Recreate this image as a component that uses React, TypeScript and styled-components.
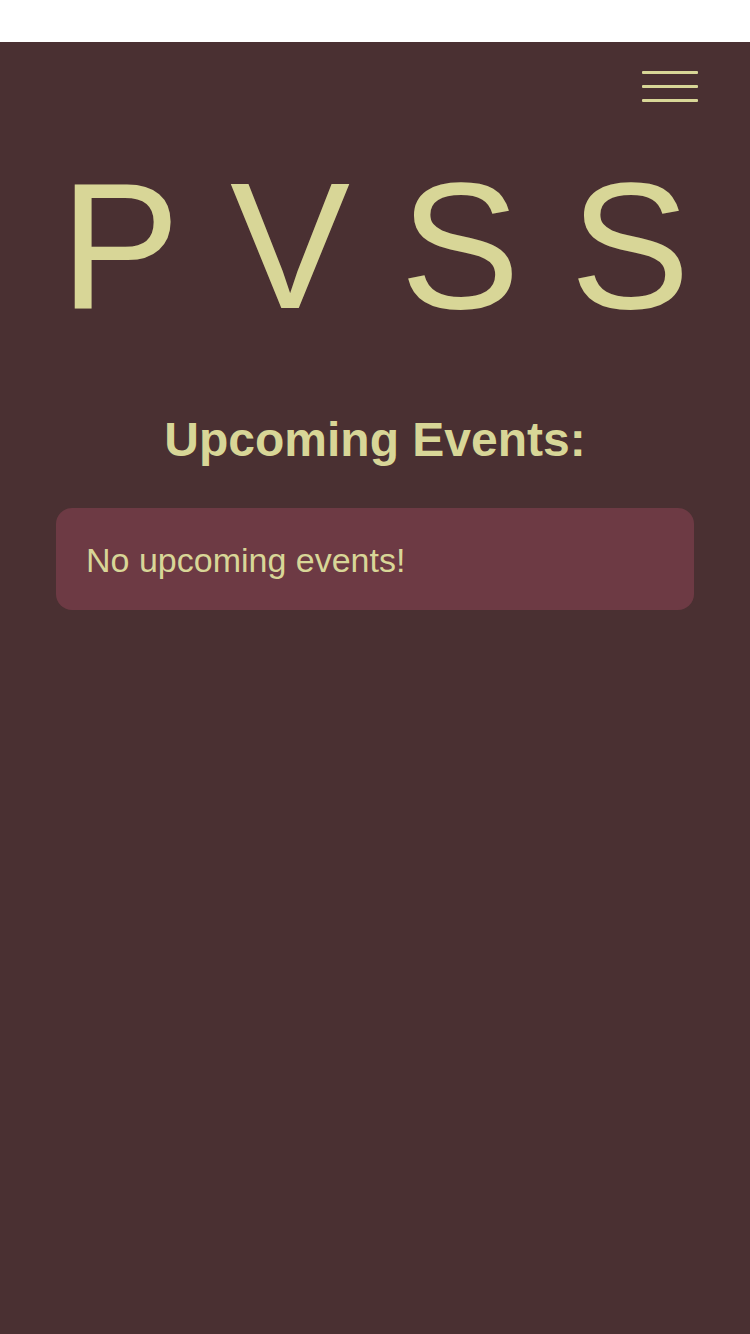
import React from "react";
import styled, { createGlobalStyle } from "styled-components";

const GlobalStyle = createGlobalStyle`
  html, body {
    margin: 0;
    padding: 0;
    background: #ffffff;
  }
  body {
    font-family: "Liberation Sans", Arial, Helvetica, sans-serif;
  }
  * { box-sizing: border-box; }
`;

const Page = styled.div`
  padding-top: 42px;
  background: #ffffff;
`;

const Main = styled.main`
  background: #4a3032;
  min-height: 1292px;
  color: #d8d697;
  display: flex;
  flex-direction: column;
`;

const Header = styled.header`
  display: flex;
  justify-content: flex-end;
  padding: 29px 52px 0 0;
`;

const MenuButton = styled.button`
  width: 56px;
  height: 31px;
  padding: 0;
  border: 0;
  background: transparent;
  display: flex;
  flex-direction: column;
  justify-content: space-between;
  cursor: pointer;
`;

const Bar = styled.span`
  display: block;
  width: 100%;
  height: 3px;
  border-radius: 1px;
  background: #d8d697;
`;

const Title = styled.h1`
  margin: 54px 0 0;
  padding-left: 50px;
  font-size: 180px;
  line-height: 1;
  font-weight: 400;
  letter-spacing: 50px;
  text-align: center;
  color: #d8d697;
`;

const Heading = styled.h2`
  margin: 80px 0 0;
  font-size: 48px;
  line-height: 1;
  font-weight: 700;
  text-align: center;
  color: #d8d697;
`;

const EventCard = styled.div`
  margin: 44px 56px 0;
  height: 102px;
  padding: 2px 30px 0;
  display: flex;
  align-items: center;
  background: #6d3a44;
  border-radius: 16px;
  font-size: 34px;
  color: #d8d697;
`;

export default function App() {
  return (
    <>
      <GlobalStyle />
      <Page>
        <Main>
          <Header>
            <MenuButton aria-label="Menu">
              <Bar />
              <Bar />
              <Bar />
            </MenuButton>
          </Header>
          <Title>PVSS</Title>
          <Heading>Upcoming Events:</Heading>
          <EventCard>No upcoming events!</EventCard>
        </Main>
      </Page>
    </>
  );
}
